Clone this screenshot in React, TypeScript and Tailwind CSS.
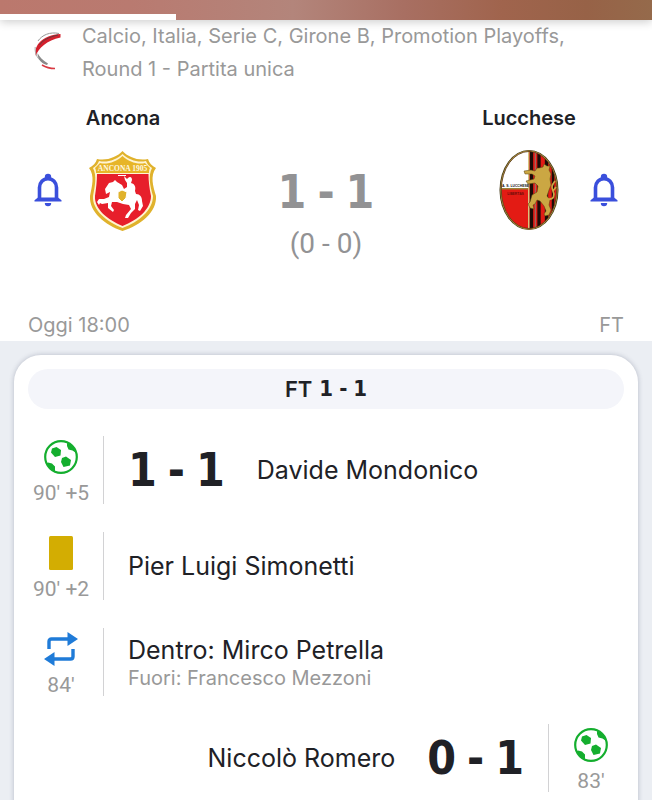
import type { ReactNode } from "react";

function Bell({ team }: { team: string }) {
  return (
    <button type="button" aria-label={`Notifiche ${team}`} className="mt-[67px] shrink-0 text-[#3a4fdc]">
      <svg width="28" height="34" viewBox="0 0 28 34" fill="none" aria-hidden="true">
        <path d="M10.800 6V4a3.200 3.200 0 0 1 6.400 0v2Z" fill="currentColor" />
        <path d="M5.500 26V14.500c0-5.200 3.600-8.800 8.500-8.800s8.500 3.600 8.500 8.800V26" stroke="currentColor" strokeWidth="3.600" />
        <path d="M.5 28.500v-1.200L4 24.600h20l3.500 2.700v1.200Z" fill="currentColor" />
        <path d="M10.800 30h6.400a3.200 3.200 0 0 1-6.400 0Z" fill="currentColor" />
      </svg>
    </button>
  );
}

function LeagueLogo() {
  return (
    <svg width="28" height="38" viewBox="0 0 28 38" aria-hidden="true" className="shrink-0">
      <path d="M25 1.500C16-.5 8 3 4 9" stroke="#999" strokeWidth="1" fill="none" />
      <path d="M26.500 2C18 2.500 10 5 5 11 1.500 15 .8 20 2 24 4 16 13 8.500 26.500 5.500Z" fill="#d4202d" />
      <path d="M24 3C15 5 9 8 5.500 13" stroke="#444" strokeWidth=".8" fill="none" />
      <path d="M1.200 15C.5 22 4 28 10 31" stroke="#aaa" strokeWidth="1" fill="none" />
      <path d="M3.500 21c2 4 5 7 10.500 10.500l-1 1.500C7 31 3.500 27 3.500 21Z" fill="#8a8a8a" />
      <path d="M8 33c4 2.500 7 3.500 13 3.500" stroke="#d93a43" strokeWidth="1.500" fill="none" />
    </svg>
  );
}

function AnconaCrest() {
  return (
    <svg width="68" height="82" viewBox="0 0 68 82" role="img" aria-label="Stemma Ancona">
      <path d="M33.500 1C39 7 49 11 59 9c1 4 4 7 8 9-6 8-3 18 0 28 1 16-15 29-33.500 35C16 75 0 62 1 46c2-10 5-20-1-28 4-2 7-5 8-9 10 2 20-2 25.500-8Z" fill="#e0b22c" />
      <path d="M33.500 4C40 10 49 13 57 11c1 3 3 5 6 7-4 8-2 18 1 28 0 14-14 26-30.500 32C18 72 3 60 4 46c2-10 4-20 0-28 3-2 5-4 6-7 8 2 17-1 23.500-7Z" fill="#fff4d2" />
      <path d="M33.500 6C40 12 49 15 56 13l5 5c-1 2-1 3-1 5H7c0-2 0-3-1-5l5-5c7 2 16-1 22.500-7Z" fill="#e7b528" />
      <path d="M8 24h51.500c0 7 1 15 2.500 22 0 13-13 24-28.500 30C19 70 5 59 6 46c1-7 2-15 2-22Z" fill="#e71f2b" />
      <text x="33.500" y="21" textAnchor="middle" fontFamily="Liberation Serif, serif" fontWeight="700" fontSize="7.500" fill="#fff8e0">ANCONA 1905</text>
      <path d="m16 39 4-6 4-1 2-2 2 2 5 3 2 4 3-2v-4l-2-3-1-4 3 3 1-1c2-2 4-1 4 2l-1 3c4 1 5 4 4 8l1 3c4 0 6 3 6 7l1 5-3 5-2-1 1-5-2-5-2 4v5l-4 4-3 5h-3l1-3 5-6-2-4-6-1-6-2-5 0-1 4 3 4-1 2-5-4v-5l-6 1-2-1-1 2-2-3 2-3h5l5-2 1-5-4 2Z" fill="#fff" />
      <path d="m29 42 4-2 5 2-1 6-4 4-4-4Z" fill="#e0b22c" stroke="#fff" />
      <path d="M29 25.500h8" stroke="#fff" strokeWidth="1" />
    </svg>
  );
}

function LuccheseCrest() {
  return (
    <svg width="60" height="82" viewBox="0 0 60 82" role="img" aria-label="Stemma Lucchese">
      <defs>
        <clipPath id="lucchese-oval"><ellipse cx="30" cy="40" rx="27.500" ry="38.500" /></clipPath>
      </defs>
      <ellipse cx="30" cy="40" rx="29.500" ry="40" fill="#3d3212" />
      <ellipse cx="30" cy="40" rx="28.700" ry="39.400" fill="#bfa045" />
      <g clipPath="url(#lucchese-oval)">
        <rect width="60" height="82" fill="#e31b14" />
        <rect width="29" height="39" fill="#fff" />
        <rect y="38" width="30" height="1.500" fill="#9b8338" />
        <rect x="29" width="1.500" height="82" fill="#d8c37e" />
        <path d="M32.500 0v82M40 0v82M47.500 0v82" stroke="#1c0c08" strokeWidth="3.300" />
        <path d="M36.300 0v82" stroke="#8d7b70" strokeWidth="1" />
        <path d="M54 0v82" stroke="#1c0c08" strokeWidth="2.500" />
      </g>
      <ellipse cx="30" cy="40" rx="27.700" ry="38.500" fill="none" stroke="#3d3212" strokeWidth=".7" />
      <text x="16.500" y="37" textAnchor="middle" fontFamily="Liberation Sans, sans-serif" fontWeight="700" fontSize="3.400" fill="#111">A. S. LUCCHESE</text>
      <text x="16.500" y="44.500" textAnchor="middle" fontFamily="Liberation Sans, sans-serif" fontWeight="700" fontSize="3.400" fill="#6d0d09">LIBERTAS</text>
      <path d="m40 18 4-1 1-3 3 2h3l-1 4 2 4-1 5 1 6-2 5-2 6 3 4-1 5 2 5-2 5-4 1-1-2 2-3-2-5-4-5-3-1-2 4-2 1 1 4-4-1-2-4 2-2 2-7 5-3 1-6-3-3-7 1-2-3 8-2 1-3-3-2-7 0-1-3 7-1 4 1 2-3Z" fill="#cba743" stroke="#54400e" strokeWidth=".5" />
      <path d="M49 49c6 1 7-4 5-8s-1-6 2-10M54 41l3-4" fill="none" stroke="#cba743" strokeWidth="1.700" />
    </svg>
  );
}

function Ball() {
  return (
    <svg width="34" height="34" viewBox="0 0 34 34" role="img" aria-label="Gol">
      <defs>
        <clipPath id="ball-edge"><circle cx="17" cy="17" r="16" /></clipPath>
      </defs>
      <g clipPath="url(#ball-edge)" fill="#14ae2e">
        <path d="m12.500 7 4.500 3-.5 5.500-5.500 1.500L7 12.500 8 8.500Z" />
        <path d="m22 16.500 5 3.500-1 5.500-6.500 1.500-2.500-5 1-4Z" />
        <path d="m23 3 8 2 3 9-4-2.500-1.500-1-4-1-1.500-3.500Z" />
        <path d="m1 24 3-1.500 4 1 3 3v6l-7-2-5-6Z" />
      </g>
      <circle cx="17" cy="17" r="15.800" fill="none" stroke="#14ae2e" strokeWidth="2.200" />
    </svg>
  );
}

function YellowCard() {
  return (
    <svg width="24" height="34" viewBox="0 0 24 34" role="img" aria-label="Ammonizione">
      <rect width="24" height="34" rx="1.500" fill="#d3ad02" />
    </svg>
  );
}

function Swap() {
  return (
    <svg width="34" height="34" viewBox="0 0 34 34" role="img" aria-label="Sostituzione">
      <path d="M5 17V9.500Q5 7 7.500 7H24M29 17v7.500q0 2.500-2.500 2.500H10" fill="none" stroke="#1f7bd8" strokeWidth="3.400" />
      <path d="M23.500 0 34 7l-10.500 7ZM10.500 20 0 27l10.500 7Z" fill="#1f7bd8" />
    </svg>
  );
}

function Score({ home, away }: { home: number; away: number }) {
  return (
    <span className="flex items-center gap-[11px] font-['DejaVu_Sans_Condensed','DejaVu_Sans',sans-serif] text-[46px] leading-[52px] font-bold">
      <span>{home}</span>
      <span>-</span>
      <span>{away}</span>
    </span>
  );
}

function EventRow({ icon, minute, away = false, children }: { icon: ReactNode; minute: string; away?: boolean; children: ReactNode }) {
  return (
    <li className={`flex h-24 shrink-0 items-center ${away ? "flex-row-reverse" : ""}`}>
      <div className="flex w-[66px] flex-col items-center self-start pt-[18px]">
        {icon}
        <span className="mt-[7px] font-[Roboto,sans-serif] text-[21px] leading-6 whitespace-nowrap text-[#999]">{minute}</span>
      </div>
      <div className={`h-[68px] w-px bg-[#d2d2d4] ${away ? "mr-[9px]" : "ml-[9px]"}`} />
      <div className={`flex min-w-0 flex-1 items-center ${away ? "justify-end pr-6" : "pl-6"}`}>{children}</div>
    </li>
  );
}

export default function App() {
  return (
    <div className="flex h-screen flex-col overflow-hidden bg-white font-[Inter,sans-serif] text-[#202126]">
      <div className="relative z-10 flex h-5 shrink-0 items-end bg-[linear-gradient(90deg,#bb786d_0%,#b97a70_20%,#b3857b_45%,#a86f62_62%,#a0644d_77%,#976247_90%,#956a4b_100%)] shadow-[0_2px_10px_rgba(0,0,0,0.2)]">
        <div className="h-[6px] w-[27%] bg-white" />
      </div>

      <header className="shrink-0 px-7">
        <div className="flex items-start pl-[6px]">
          <div className="mt-3">
            <LeagueLogo />
          </div>
          <p className="ml-5 max-w-[520px] text-[20px] leading-[33px] text-[#999]">
            Calcio, Italia, Serie C, Girone B, Promotion Playoffs, Round 1 - Partita unica
          </p>
        </div>

        <div className="mt-5 flex items-start justify-between px-[6px]">
          <div className="flex items-start">
            <Bell team="Ancona" />
            <div className="ml-2 flex w-[106px] flex-col items-center">
              <h2 className="text-[20px] leading-6 font-semibold">Ancona</h2>
              <div className="mt-5">
                <AnconaCrest />
              </div>
            </div>
          </div>
          <div className="flex flex-col items-center pt-[60px] text-[#929294]">
            <Score home={1} away={1} />
            <span className="mt-[10px] font-[Roboto,sans-serif] text-[28px] leading-8">(0 - 0)</span>
          </div>
          <div className="flex items-start">
            <div className="mr-2 flex w-[106px] flex-col items-center">
              <h2 className="text-[20px] leading-6 font-semibold">Lucchese</h2>
              <div className="mt-5">
                <LuccheseCrest />
              </div>
            </div>
            <Bell team="Lucchese" />
          </div>
        </div>

        <div className="mt-[53px] flex justify-between pb-1 text-[20px] leading-6 text-[#999]">
          <span>Oggi 18:00</span>
          <span>FT</span>
        </div>
      </header>

      <main className="min-h-0 flex-1 overflow-hidden bg-[#ebeef3] px-[14px] pt-[14px]">
        <section className="rounded-t-[27px] bg-white px-[14px] pt-[14px] shadow-[0_0_5px_rgba(60,65,95,0.3)]">
          <h3 className="flex h-10 items-center justify-center gap-[7px] rounded-full bg-[#f4f5fa] text-[22px] leading-7 font-semibold">
            <span>FT</span>
            <span className="flex gap-[6px] font-['DejaVu_Sans_Condensed','DejaVu_Sans',sans-serif] font-bold">
              <span>1</span>
              <span>-</span>
              <span>1</span>
            </span>
          </h3>
          <ul className="pt-[13px]">
            <EventRow icon={<Ball />} minute="90' +5">
              <Score home={1} away={1} />
              <span className="ml-8 text-[25px] leading-8">Davide Mondonico</span>
            </EventRow>
            <EventRow icon={<YellowCard />} minute="90' +2">
              <span className="text-[25px] leading-8">Pier Luigi Simonetti</span>
            </EventRow>
            <EventRow icon={<Swap />} minute="84'">
              <div className="flex flex-col">
                <span className="text-[25px] leading-8">Dentro: Mirco Petrella</span>
                <span className="text-[20px] leading-6 text-[#999]">Fuori: Francesco Mezzoni</span>
              </div>
            </EventRow>
            <EventRow icon={<Ball />} minute="83'" away>
              <span className="mr-8 text-[25px] leading-8">Niccolò Romero</span>
              <Score home={0} away={1} />
            </EventRow>
          </ul>
        </section>
      </main>
    </div>
  );
}
